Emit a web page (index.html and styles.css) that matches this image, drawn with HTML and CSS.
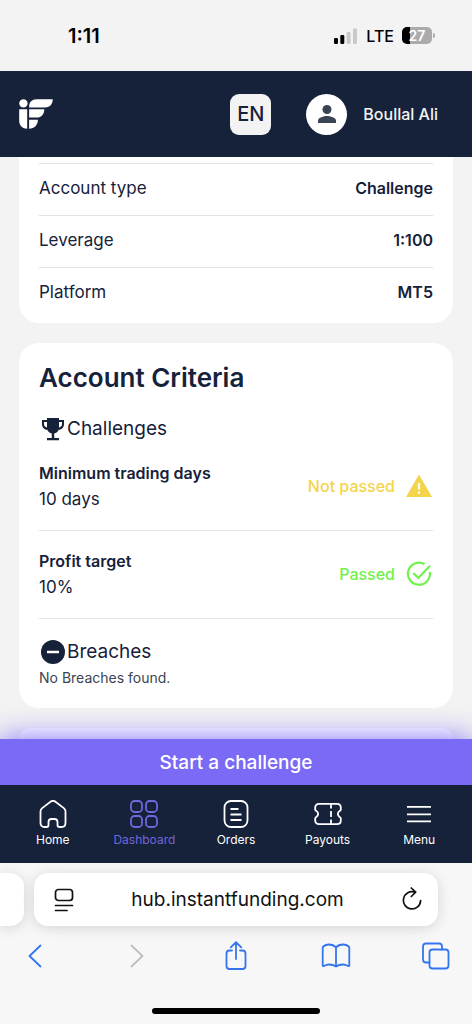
FILE: index.html
```html
<!DOCTYPE html>
<html lang="en">
<head>
<meta charset="utf-8">
<meta name="viewport" content="width=device-width, initial-scale=1">
<title>Instant Funding</title>
<link rel="stylesheet" href="styles.css">
</head>
<body>
<div class="status">
  <span class="status-time">1:11</span>
  <div class="status-right">
    <svg class="signal" width="24" height="16" viewBox="0 0 24 16" aria-hidden="true">
      <rect x="0" y="10" width="4" height="6" rx="1.3"/>
      <rect x="6.3" y="7" width="4" height="9" rx="1.3"/>
      <rect x="12.6" y="4" width="4" height="12" rx="1.3" fill="#c9c9c9"/>
      <rect x="19" y="0.5" width="4" height="15.5" rx="1.3" fill="#c9c9c9"/>
    </svg>
    <span class="network">LTE</span>
    <span class="battery">27</span>
  </div>
</div>

<header class="header">
  <a class="logo" href="#" aria-label="Instant Funding">
    <svg width="35" height="30" viewBox="0 0 35 30" fill="#fff" aria-hidden="true">
      <circle cx="4.4" cy="4.4" r="4.2"/>
      <path d="M10.1 8.4V7.6C10.1 3 13 .2 17.5.2h16.200c0 5-3 8.200-7.500 8.200z"/>
      <path d="M.2 10.200h8v19.500C3.500 29.700.2 26.500.2 22z"/>
      <path d="M10.100 10.200h15.200c0 5-3 8.400-7.500 8.400h-7.700z"/>
      <path d="M10.100 20.800h8.800c0 5.200-3.500 8.900-8.800 8.900z"/>
    </svg>
  </a>
  <button class="lang" type="button">EN</button>
  <button class="profile" type="button">
    <span class="avatar">
      <svg width="18" height="18" viewBox="0 0 18 18" fill="#3b4453" aria-hidden="true">
        <circle cx="9" cy="4.500" r="4.500"/>
        <path d="M0 18v-2.300c0-3 6-4.600 9-4.600s9 1.600 9 4.600V18z"/>
      </svg>
    </span>
    <span>Boullal Ali</span>
  </button>
</header>

<main class="main">
  <section class="card details">
    <dl class="rows">
      <div class="row"><dt>Account type</dt><dd>Challenge</dd></div>
      <div class="row"><dt>Leverage</dt><dd>1:100</dd></div>
      <div class="row"><dt>Platform</dt><dd>MT5</dd></div>
    </dl>
  </section>

  <section class="card criteria">
    <h2 class="title">Account Criteria</h2>
    <h3 class="subtitle">
      <svg width="28" height="28" viewBox="0 0 28 28" aria-hidden="true">
        <path fill="#16213a" d="M8 3h12v2h5v4c0 3.300-2 5.600-5.200 5.800-.9 2-2.500 3.200-4.600 3.600V23H20v2.300H8V23h4.800v-4.600c-2.100-.4-3.700-1.600-4.600-3.600C5 14.600 3 12.300 3 9V5h5zM5 7v2c0 1.800 1.100 3.100 3 3.500V7zm15 0v5.500c1.900-.4 3-1.700 3-3.500V7z"/>
      </svg>
      Challenges
    </h3>
    <div class="criterion">
      <div>
        <p class="criterion-name">Minimum trading days</p>
        <p class="criterion-value">10 days</p>
      </div>
      <div class="result pending">
        Not passed
        <svg width="28" height="28" viewBox="0 0 28 28" aria-hidden="true">
          <path fill="#f4d44a" d="M14 2.500 27 25H1z"/>
          <path stroke="#fff" stroke-width="2.200" d="M14 11v6.500M14 19.500v2.300"/>
        </svg>
      </div>
    </div>
    <div class="criterion">
      <div>
        <p class="criterion-name">Profit target</p>
        <p class="criterion-value">10%</p>
      </div>
      <div class="result passed">
        Passed
        <svg width="28" height="28" viewBox="0 0 28 28" fill="none" stroke="#6ff24b" stroke-width="2.200" aria-hidden="true">
          <path d="M19.500 4.200A11 11 0 1 0 24.800 12"/>
          <path d="m8.300 13 5 5L25 5.800"/>
        </svg>
      </div>
    </div>
    <h3 class="subtitle breaches">
      <svg width="28" height="28" viewBox="0 0 28 28" aria-hidden="true">
        <circle cx="14" cy="14" r="12" fill="#16213a"/>
        <path d="M8 14h12" stroke="#fff" stroke-width="2.500"/>
      </svg>
      Breaches
    </h3>
    <p class="note">No Breaches found.</p>
  </section>

  <section class="card next"></section>
</main>

<button class="cta" type="button">Start a challenge</button>

<nav class="nav">
  <a class="nav-item" href="#">
    <svg viewBox="0 0 28 28" aria-hidden="true"><path d="M1.500 11.500c0-1.500.5-2.400 1.700-3.400l8.300-6.300c1.600-1.200 3.400-1.200 5 0l8.300 6.300c1.200 1 1.700 1.900 1.700 3.400V23c0 2.500-1.500 4-4 4h-2c-1.200 0-2-.8-2-2v-3c0-2-1-3-3-3h-3c-2 0-3 1-3 3v3c0 1.200-.8 2-2 2h-2c-2.500 0-4-1.500-4-4z"/></svg>
    Home
  </a>
  <a class="nav-item active" href="#" aria-current="page">
    <svg viewBox="0 0 28 28" aria-hidden="true"><rect x="1" y="1" width="11" height="11" rx="3.500"/><rect x="16" y="1" width="11" height="11" rx="3.500"/><rect x="1" y="16" width="11" height="11" rx="3.500"/><rect x="16" y="16" width="11" height="11" rx="3.500"/></svg>
    Dashboard
  </a>
  <a class="nav-item" href="#">
    <svg viewBox="0 0 28 28" aria-hidden="true"><rect x="2.500" y="1" width="23" height="26" rx="6.500"/><path d="M8.500 9h8M8.500 14.500h11M8.500 20h11"/></svg>
    Orders
  </a>
  <a class="nav-item" href="#">
    <svg viewBox="0 0 28 28" aria-hidden="true"><path d="M5 3.800h18c2.300 0 3.800 1.400 3.800 3.700v2c0 .7-.3 1-.8 1.300-2.900 1.700-2.900 4.700 0 6.400.5.300.8.600.8 1.300v2c0 2.300-1.500 3.700-3.800 3.700H5c-2.300 0-3.800-1.400-3.800-3.700v-2c0-.7.300-1 .8-1.300 2.900-1.700 2.900-4.700 0-6.400-.5-.3-.8-.6-.8-1.300v-2C1.200 5.200 2.700 3.800 5 3.800z"/><path d="M17 4v4.500M17 11v6M17 19.500V24"/></svg>
    Payouts
  </a>
  <a class="nav-item" href="#">
    <svg viewBox="0 0 28 28" aria-hidden="true"><path d="M2 6.800h24M2 14.300h24M2 21.300h24"/></svg>
    Menu
  </a>
</nav>

<footer class="browser">
  <div class="tabs">
    <div class="tab-edge"></div>
    <div class="address">
      <button class="icon-button" type="button" aria-label="Page settings">
        <svg width="20" height="24" viewBox="0 0 20 24" fill="none" stroke="#111" stroke-width="1.700" stroke-linecap="round" aria-hidden="true"><rect x="1.500" y="1.500" width="17" height="11" rx="3"/><path d="M1.500 17.500h17M1.500 22.500H13"/></svg>
      </button>
      <input class="url" type="text" aria-label="Address" value="hub.instantfunding.com">
      <button class="icon-button" type="button" aria-label="Reload">
        <svg width="22" height="26" viewBox="0 0 22 26" fill="none" stroke="#111" stroke-width="1.700" stroke-linecap="round" stroke-linejoin="round" aria-hidden="true"><path d="M13.800 5.200A8.600 8.600 0 1 0 19.600 13.600M10.300 1l4.400 4.200-4.400 4.300"/></svg>
      </button>
    </div>
  </div>
  <div class="toolbar">
    <button class="tool" type="button" aria-label="Back"><svg viewBox="0 0 30 30" aria-hidden="true"><path d="m19.500 4.500-11 10.500 11 10.500"/></svg></button>
    <button class="tool" type="button" aria-label="Forward" disabled><svg viewBox="0 0 30 30" aria-hidden="true"><path d="m10.500 4.500 11 10.500-11 10.500"/></svg></button>
    <button class="tool" type="button" aria-label="Share"><svg viewBox="0 0 30 30" aria-hidden="true"><path d="M11 9.500H8.500c-2 0-3 1-3 3V25c0 2 1 3 3 3h13c2 0 3-1 3-3V12.500c0-2-1-3-3-3H19M15 18V1.200M9.800 6.400 15 1.200l5.200 5.200"/></svg></button>
    <button class="tool" type="button" aria-label="Bookmarks"><svg viewBox="0 0 30 30" aria-hidden="true"><path d="M15 25.500V6.500c-1.800-2-4.200-3-7-3-2.300 0-4.200.7-5.700 2-.4.400-.6.800-.6 1.400v17.400c0 .8.600 1.100 1.300.7 1.500-1 3.100-1.500 5-1.500 2.800 0 5.200.7 7 2 1.800-1.300 4.200-2 7-2 1.900 0 3.500.5 5 1.500.7.400 1.300.1 1.300-.7V6.900c0-.6-.2-1-.6-1.400-1.500-1.300-3.400-2-5.700-2-2.800 0-5.200 1-7 3"/></svg></button>
    <button class="tool" type="button" aria-label="Tabs"><svg viewBox="0 0 30 30" aria-hidden="true"><path d="M8.500 21.500H5c-2 0-3-1-3-3V5.500c0-2 1-3 3-3h13c2 0 3 1 3 3V8.500"/><rect x="8.500" y="8.500" width="19" height="19" rx="3"/></svg></button>
  </div>
  <div class="home-bar"></div>
</footer>
</body>
</html>
```
FILE: styles.css
```css
* {
  box-sizing: border-box;
}

body {
  margin: 0;
  height: 100vh;
  display: flex;
  flex-direction: column;
  background: #f3f3f3;
  color: #16213a;
  font-family: Inter, "Liberation Sans", sans-serif;
  font-size: 16px;
}

button,
input {
  margin: 0;
  padding: 0;
  border: 0;
  background: none;
  color: inherit;
  font: inherit;
}

svg {
  display: block;
  flex: none;
}

h2,
h3,
p,
dl,
dd {
  margin: 0;
}

.status {
  height: 71px;
  flex: none;
  display: flex;
  align-items: center;
  justify-content: space-between;
  padding: 0 40px 0 68px;
  color: #000;
}

.status-time {
  font-size: 20px;
  font-weight: 600;
}

.status-right {
  display: flex;
  align-items: center;
  gap: 8px;
}

.network {
  font-weight: 500;
}

.battery {
  position: relative;
  width: 30px;
  height: 17px;
  border-radius: 5px;
  background: linear-gradient(to right, #000 8px, #ababab 8px);
  color: #fff;
  font-size: 14px;
  font-weight: 600;
  line-height: 17px;
  text-align: center;
}

.battery::after {
  content: "";
  position: absolute;
  left: 31px;
  top: 6px;
  width: 2px;
  height: 5px;
  border-radius: 0 2px 2px 0;
  background: #ababab;
}

.header {
  height: 86px;
  flex: none;
  display: flex;
  align-items: center;
  padding: 0 34px 0 19px;
  background: #16213a;
}

.logo {
  margin-right: auto;
}

.lang {
  width: 41px;
  height: 41px;
  margin-right: 35px;
  border-radius: 9px;
  background: #f3f3f4;
  font-size: 20px;
  font-weight: 500;
}

.profile {
  display: flex;
  align-items: center;
  gap: 16px;
  color: #f3f3f4;
  font-weight: 500;
}

.avatar {
  width: 41px;
  height: 41px;
  display: grid;
  place-items: center;
  border-radius: 50%;
  background: #fff;
}

.main {
  flex: 1;
  min-height: 0;
  overflow: hidden;
  display: flex;
  flex-direction: column;
  gap: 20px;
  padding: 0 19px;
}

.card {
  flex: none;
  padding: 19px 20px 18px;
  border-radius: 20px;
  background: #fff;
}

.details {
  padding-top: 6px;
  padding-bottom: 4px;
  border-radius: 0 0 20px 20px;
}

.row {
  height: 52px;
  display: flex;
  align-items: center;
  justify-content: space-between;
  padding-bottom: 3px;
  border-top: 1px solid #e2e2e4;
}

.row dt {
  font-size: 17px;
}

.row dd {
  font-weight: 600;
}

.title {
  font-size: 26px;
  font-weight: 600;
  line-height: 32px;
}

.subtitle {
  display: flex;
  align-items: center;
  margin-top: 21px;
  font-size: 19px;
  font-weight: 400;
  line-height: 28px;
}

.criterion {
  display: flex;
  align-items: center;
  justify-content: space-between;
  padding: 17px 0 18px;
  border-bottom: 1px solid #e2e2e4;
  line-height: 26px;
}

.criterion-name {
  font-weight: 600;
}

.criterion-value {
  font-size: 17px;
}

.result {
  display: flex;
  align-items: center;
  gap: 10px;
  font-weight: 500;
}

.pending {
  color: #f4d44a;
}

.passed {
  color: #6ff24b;
}

.breaches {
  margin-top: 19px;
}

.note {
  color: #3b4453;
  font-size: 14px;
  line-height: 24px;
}

.next {
  flex: 1;
  padding: 0;
  border-radius: 20px 20px 0 0;
}

.cta {
  height: 46px;
  flex: none;
  z-index: 1;
  background: #7b6af5;
  box-shadow: 0 0 30px #7b6af5;
  color: #fff;
  font-size: 19px;
  font-weight: 500;
}

.nav {
  z-index: 2;
  height: 78px;
  flex: none;
  display: grid;
  grid-template-columns: repeat(5, 1fr);
  padding: 15px 7px 0;
  background: #16213a;
}

.nav-item {
  display: flex;
  flex-direction: column;
  align-items: center;
  gap: 4px;
  color: #fff;
  font-size: 12px;
  line-height: 16px;
  text-decoration: none;
}

.nav-item svg {
  width: 28px;
  height: 28px;
  fill: none;
  stroke: currentColor;
  stroke-width: 1.8;
}

.active {
  color: #7166de;
}

.browser {
  z-index: 2;
  flex: none;
  display: flex;
  flex-direction: column;
  padding: 10px 0;
  background: #f7f7f8;
  overflow: hidden;
}

.tabs {
  display: flex;
  gap: 10px;
  padding-right: 34px;
}

.tab-edge {
  width: 24px;
  border-radius: 0 14px 14px 0;
  background: #fff;
  box-shadow: 0 2px 14px #00000024;
}

.address {
  flex: 1;
  height: 53px;
  display: flex;
  align-items: center;
  padding: 0 15px 0 20px;
  border-radius: 14px;
  background: #fff;
  box-shadow: 0 2px 14px #00000024;
}

.url {
  flex: 1;
  min-width: 0;
  color: #111;
  font-size: 19px;
  text-align: center;
}

.toolbar {
  display: flex;
  justify-content: space-between;
  padding: 15px 16px 0;
}

.tool {
  width: 40px;
  height: 30px;
  display: grid;
  place-items: center;
  color: #3475ee;
}

.tool:disabled {
  color: #bebec0;
}

.tool svg {
  width: 30px;
  height: 30px;
  fill: none;
  stroke: currentColor;
  stroke-width: 1.8;
  stroke-linecap: round;
  stroke-linejoin: round;
}

.home-bar {
  width: 168px;
  height: 6px;
  margin: 37px auto 0;
  border-radius: 3px;
  background: #000;
}
```
